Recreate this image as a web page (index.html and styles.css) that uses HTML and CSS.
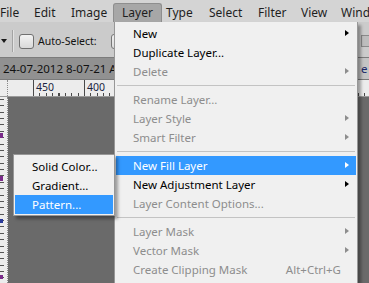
FILE: index.html
```html
<!DOCTYPE html>
<html lang="en">
<head>
    <meta charset="UTF-8">
    <title>Layer menu</title>
    <link rel="stylesheet" href="styles.css">
</head>
<body>
<div class="app">
    <!-- menu bar -->
    <div class="menubar">
        <span class="menu-title">File</span>
        <span class="menu-title">Edit</span>
        <span class="menu-title">Image</span>
        <span class="menu-title open">Layer</span>
        <span class="menu-title">Type</span>
        <span class="menu-title">Select</span>
        <span class="menu-title">Filter</span>
        <span class="menu-title">View</span>
        <span class="menu-title">Wind</span>
    </div>

    <!-- options bar -->
    <div class="options">
        <span class="tool-arrow"></span>
        <span class="opt-sep"></span>
        <span class="checkbox"></span>
        <span class="opt-label">Auto-Select:</span>
        <span class="opt-select"></span>
        <span class="opt-box"></span>
    </div>

    <!-- document tabs -->
    <div class="doc-tabs">
        <span class="doc-tab"><span class="doc-name">24-07-2012 8-07-21 AM</span></span>
        <span class="doc-tab other">e @</span>
    </div>

    <!-- rulers + canvas -->
    <div class="ruler-top">
        <span class="ruler-corner"></span>
        <span class="ruler-num first">450</span>
        <span class="ruler-num">400</span>
    </div>
    <div class="workspace">
        <div class="ruler-left"></div>
        <div class="canvas"></div>
    </div>

    <!-- Layer menu -->
    <div class="dropdown layer-menu">
        <div class="item sub">New</div>
        <div class="item">Duplicate Layer...</div>
        <div class="item sub disabled">Delete</div>
        <div class="sep"></div>
        <div class="item disabled">Rename Layer...</div>
        <div class="item sub disabled">Layer Style</div>
        <div class="item sub disabled">Smart Filter</div>
        <div class="sep"></div>
        <div class="item sub active">New Fill Layer</div>
        <div class="item sub">New Adjustment Layer</div>
        <div class="item disabled">Layer Content Options...</div>
        <div class="sep"></div>
        <div class="item sub disabled">Layer Mask</div>
        <div class="item sub disabled">Vector Mask</div>
        <div class="item disabled">Create Clipping Mask<span class="shortcut">Alt+Ctrl+G</span></div>
    </div>

    <!-- New Fill Layer submenu -->
    <div class="dropdown fill-menu">
        <div class="item">Solid Color...</div>
        <div class="item">Gradient...</div>
        <div class="item active">Pattern...</div>
    </div>
</div>
</body>
</html>
```

FILE: styles.css
```css
* {
    box-sizing: border-box;
}

body {
    margin: 0;
    width: 369px;
    height: 283px;
    overflow: hidden;
    font-family: "Noto Sans", "Open Sans", sans-serif;
    font-size: 11.5px;
    color: #000000;
    background-color: #6a6a6a;
}

.app {
    position: relative;
    height: 283px;
    display: flex;
    flex-direction: column;
    overflow: hidden;
}

/* menu bar */
.menubar {
    height: 22px;
    flex: none;
    display: grid;
    grid-template-columns: 34px 37px 50px 45px 43px 49px 43px 40px auto;
    align-items: end;
    background-color: #d4d4d4;
    color: #1e1e1e;
    font-size: 12px;
    white-space: nowrap;
}

.menu-title {
    height: 19px;
    line-height: 19px;
}

.menu-title.open {
    justify-self: start;
    margin-left: -8px;
    padding: 0 8px;
    background-color: #a7a7a7;
    border: 1px solid #8e8e8e;
    border-bottom: none;
    border-radius: 3px 3px 0 0;
    line-height: 17px;
}

/* options bar */
.options {
    height: 36px;
    flex: none;
    display: flex;
    align-items: center;
    padding-top: 3px;
    background-color: #cbcbcb;
    border-bottom: 1px solid #7c7c7c;
}

.tool-arrow {
    margin-left: 1px;
    border-top: 4px solid #1a1a1a;
    border-left: 3.5px solid transparent;
    border-right: 3.5px solid transparent;
}

.opt-sep {
    width: 2px;
    height: 22px;
    margin-left: 5px;
    border-left: 1px solid #a3a3a3;
    border-right: 1px solid #e2e2e2;
}

.checkbox {
    width: 15px;
    height: 15px;
    margin-left: 5px;
    border: 1px solid #707070;
    border-radius: 3px;
    background: linear-gradient(#f3f3f3, #d9d9d9);
}

.opt-label {
    margin-left: 4px;
    font-size: 10.5px;
    color: #111111;
}

.opt-select {
    width: 40px;
    height: 15px;
    margin-left: 14px;
    border: 1px solid #777777;
    border-radius: 3px;
    background: linear-gradient(#f0f0f0, #dcdcdc);
}

.opt-box {
    width: 14px;
    height: 12px;
    margin-left: auto;
    margin-right: -6px;
    border: 1px solid #8a8a8a;
    background-color: #bdbdbd;
}

/* document tabs */
.doc-tabs {
    height: 22px;
    flex: none;
    display: flex;
    background-color: #919191;
    border-bottom: 1px solid #7a7a7a;
    white-space: nowrap;
    overflow: hidden;
}

.doc-tab {
    line-height: 21px;
    font-size: 11.5px;
    color: #111111;
}

.doc-tab:first-child {
    width: 358px;
    flex: none;
    padding-left: 3px;
}

.doc-name {
    display: inline-block;
    max-width: 111px;
    overflow: hidden;
    vertical-align: top;
}

.doc-tab.other {
    flex: 1;
    padding-left: 3px;
    background-color: #c4c4c4;
    color: #1c2a6a;
}

/* rulers */
.ruler-top {
    height: 17px;
    flex: none;
    display: flex;
    background-color: #ececec;
    background-image:
        repeating-linear-gradient(90deg, #4a4a4a 0 1px, transparent 1px 51px),
        repeating-linear-gradient(90deg, #4a4a4a 0 1px, transparent 1px 6.375px);
    background-size: 100% 17px, 100% 4px;
    background-position: 33px 0, 33px 13px;
    background-repeat: no-repeat;
    border-bottom: 1px solid #9a9a9a;
    font-size: 10.5px;
    color: #1b2440;
    white-space: nowrap;
}

.ruler-corner {
    width: 8px;
    flex: none;
    background-color: #ececec;
    border-right: 1px dotted #8a8a8a;
}

.ruler-num {
    width: 51px;
    flex: none;
    padding-left: 3px;
    line-height: 14px;
}

.ruler-num.first {
    margin-left: 25px;
}

.workspace {
    flex: 1;
    display: flex;
}

.ruler-left {
    width: 8px;
    flex: none;
    background-color: #ececec;
    background-image:
        linear-gradient(#7a2a8a, #7a2a8a),
        linear-gradient(#7a2a8a, #7a2a8a),
        linear-gradient(#2a3a9a, #2a3a9a),
        linear-gradient(#7a2a8a, #7a2a8a),
        repeating-linear-gradient(180deg, #555555 0 1px, transparent 1px 6.375px);
    background-size: 3px 5px, 3px 5px, 3px 4px, 3px 4px, 4px 100%;
    background-position: 0 36px, 0 79px, 0 122px, 0 178px, 0 2px;
    background-repeat: no-repeat;
    border-right: 1px dotted #8a8a8a;
}

.canvas {
    flex: 1;
    background-color: #6a6a6a;
}

/* dropdown menus */
.dropdown {
    position: absolute;
    background-color: #f0f0f0;
    border: 1px solid #979797;
    box-shadow: 3px 3px 3px rgba(0, 0, 0, 0.35);
    white-space: nowrap;
}

.layer-menu {
    left: 114px;
    top: 22px;
    width: 244px;
    height: 280px;
    padding: 2px 1px;
    border-top: none;
}

.fill-menu {
    left: 13px;
    top: 154px;
    width: 102px;
    padding: 2px 1px 1px;
}

.item {
    position: relative;
    height: 19px;
    line-height: 19px;
    padding-left: 17px;
    color: #000000;
}

.item.disabled {
    color: #8d8d8d;
}

.item.active {
    background-color: #3399ff;
    color: #ffffff;
}

.item.sub::after {
    content: "";
    position: absolute;
    right: 7px;
    top: 6px;
    border-left: 4px solid #000000;
    border-top: 3.5px solid transparent;
    border-bottom: 3.5px solid transparent;
}

.item.sub.disabled::after {
    border-left-color: #8d8d8d;
}

.item.sub.active::after {
    border-left-color: #ffffff;
}

.shortcut {
    position: absolute;
    right: 15px;
}

.sep {
    height: 9px;
    margin: 0 1px;
    background: linear-gradient(#c3c3c3, #c3c3c3) no-repeat 0 4px / 100% 1px;
}
```
